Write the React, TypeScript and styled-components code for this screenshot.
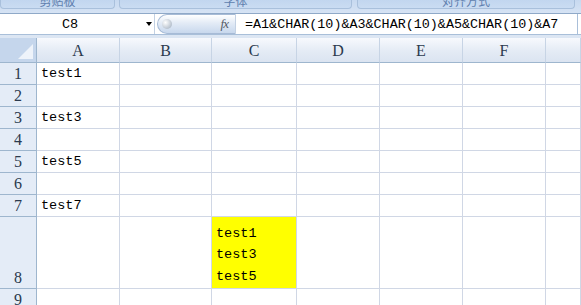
import React from "react";
import styled, { createGlobalStyle } from "styled-components";

const GlobalStyle = createGlobalStyle`
  html, body {
    margin: 0;
    padding: 0;
    background: #ffffff;
    overflow: hidden;
  }
`;

const CELL_FONT = `"Liberation Mono", "Noto Sans CJK SC", monospace`;
const HEAD_FONT = `"Liberation Serif", "Noto Sans CJK SC", serif`;
const GRID = "#d0d7e5";
const HEAD_LINE = "#9eb6ce";

const Page = styled.div`
  width: 581px;
  height: 305px;
  overflow: hidden;
  background: #dbe5f2;
`;

const Ribbon = styled.div`
  height: 13px;
  display: flex;
  align-items: flex-start;
  background: linear-gradient(#c7d9f0, #d6e3f4);
`;

const RibbonGroup = styled.div<{ $w: number; $ml: number }>`
  width: ${(p) => p.$w}px;
  margin-left: ${(p) => p.$ml}px;
  height: 9px;
  box-sizing: border-box;
  overflow: hidden;
  display: flex;
  align-items: flex-end;
  justify-content: center;
  background: linear-gradient(#c2d6ef, #cadcf2);
  border: 1px solid #a9c0dc;
  border-top: none;
  border-radius: 0 0 4px 4px;
`;

const RibbonLabel = styled.span`
  font-family: "Noto Sans CJK SC", sans-serif;
  font-size: 12px;
  line-height: 12px;
  margin-bottom: 1px;
  color: #5f7fae;
`;

const FormulaBar = styled.div`
  height: 20px;
  display: flex;
  align-items: stretch;
  background: #ffffff;
  border-top: 1px solid #8fa9c8;
  border-bottom: 1px solid #a9bfd9;
`;

const NameBox = styled.div`
  width: 155px;
  display: flex;
  align-items: center;
  border-right: 1px solid #c3d1e3;
  box-sizing: border-box;
`;

const NameText = styled.span`
  width: 140px;
  text-align: center;
  font-family: ${CELL_FONT};
  font-size: 13.5px;
  color: #000;
`;

const DropArrow = styled.span`
  width: 0;
  height: 0;
  border-left: 3.5px solid transparent;
  border-right: 3.5px solid transparent;
  border-top: 4px solid #000;
  margin-left: 6px;
`;

const FxButton = styled.div`
  margin-left: 2px;
  width: 79px;
  box-sizing: border-box;
  display: flex;
  align-items: center;
  justify-content: space-between;
  padding: 0 7px 0 4px;
  border-radius: 10px 0 0 10px;
  border: 1px solid #a7bbd6;
  border-right-color: #c3d1e3;
  background: linear-gradient(#ffffff, #e3ebf6 45%, #c8d8ed);
`;

const FxKnob = styled.span`
  width: 10px;
  height: 10px;
  border-radius: 50%;
  background: radial-gradient(circle at 35% 35%, #ffffff, #b9c3cf 70%, #9aa6b4);
`;

const FxLabel = styled.span`
  font-family: ${HEAD_FONT};
  font-style: italic;
  font-size: 13px;
  color: #555c66;
  letter-spacing: -1px;
`;

const FormulaText = styled.div`
  flex: 1;
  display: flex;
  align-items: center;
  padding-left: 9px;
  font-family: ${CELL_FONT};
  font-size: 13.4px;
  color: #000;
  white-space: nowrap;
  border-right: 1px solid #a9bfd9;
  margin-right: 3px;
`;

const Spacer = styled.div`
  height: 3px;
  background: #dce6f3;
`;

const Sheet = styled.div`
  display: grid;
  grid-template-columns: 37px 83px 92px 85px 83px 83px 83px 1fr;
  grid-template-rows: 25px repeat(7, 22px) 72px 22px;
  background: #ffffff;
`;

const Corner = styled.div`
  position: relative;
  background: #c5d6ec;
  border-right: 1px solid ${HEAD_LINE};
  border-bottom: 1px solid ${HEAD_LINE};
  box-sizing: border-box;
`;

const CornerTriangle = styled.div`
  position: absolute;
  right: 3px;
  bottom: 3px;
  width: 0;
  height: 0;
  border-left: 15px solid transparent;
  border-bottom: 15px solid #eef3fa;
`;

const ColHead = styled.div`
  display: flex;
  align-items: center;
  justify-content: center;
  box-sizing: border-box;
  background: linear-gradient(#f7f9fd, #e4ebf5 55%, #dbe4f1);
  border-right: 1px solid #c7d4e5;
  border-bottom: 1px solid ${HEAD_LINE};
  font-family: ${HEAD_FONT};
  font-size: 16px;
  color: #2b3a4e;
  padding-top: 2px;
`;

const RowHead = styled.div`
  display: flex;
  align-items: flex-end;
  justify-content: center;
  box-sizing: border-box;
  background: #e4ecf7;
  border-right: 1px solid ${HEAD_LINE};
  border-bottom: 1px solid ${HEAD_LINE};
  font-family: ${HEAD_FONT};
  font-size: 16px;
  line-height: 18px;
  color: #2b3a4e;
  padding-bottom: 1px;
`;

const Cell = styled.div<{ $fill?: string }>`
  display: flex;
  flex-direction: column;
  justify-content: flex-end;
  box-sizing: border-box;
  padding: 0 0 1px 4px;
  border-right: 1px solid ${GRID};
  border-bottom: 1px solid ${GRID};
  background: ${(p) => p.$fill ?? "#ffffff"};
  font-family: ${CELL_FONT};
  font-size: 13.5px;
  line-height: 18px;
  color: #000;
  white-space: pre;
  overflow: hidden;
`;

const WrapLine = styled.span`
  line-height: 21.5px;
`;

const columns = ["A", "B", "C", "D", "E", "F", ""];

const data: Record<string, string> = {
  A1: "test1",
  A3: "test3",
  A5: "test5",
  A7: "test7",
};

export default function App() {
  const rows = [1, 2, 3, 4, 5, 6, 7, 8, 9];
  return (
    <Page>
      <GlobalStyle />
      <Ribbon>
        <RibbonGroup $w={115} $ml={0}>
          <RibbonLabel>剪贴板</RibbonLabel>
        </RibbonGroup>
        <RibbonGroup $w={233} $ml={4}>
          <RibbonLabel>字体</RibbonLabel>
        </RibbonGroup>
        <RibbonGroup $w={218} $ml={5}>
          <RibbonLabel>对齐方式</RibbonLabel>
        </RibbonGroup>
      </Ribbon>
      <FormulaBar>
        <NameBox>
          <NameText>C8</NameText>
          <DropArrow />
        </NameBox>
        <FxButton>
          <FxKnob />
          <FxLabel>fx</FxLabel>
        </FxButton>
        <FormulaText>=A1&amp;CHAR(10)&amp;A3&amp;CHAR(10)&amp;A5&amp;CHAR(10)&amp;A7</FormulaText>
      </FormulaBar>
      <Spacer />
      <Sheet>
        <Corner>
          <CornerTriangle />
        </Corner>
        {columns.map((c, i) => (
          <ColHead key={i}>{c}</ColHead>
        ))}
        {rows.map((r) => (
          <React.Fragment key={r}>
            <RowHead>{r}</RowHead>
            {columns.map((c, i) => {
              const id = `${c}${r}`;
              if (id === "C8") {
                return (
                  <Cell key={i} $fill="#ffff00">
                    <WrapLine>test1</WrapLine>
                    <WrapLine>test3</WrapLine>
                    <WrapLine>test5</WrapLine>
                  </Cell>
                );
              }
              return <Cell key={i}>{data[id] ?? ""}</Cell>;
            })}
          </React.Fragment>
        ))}
      </Sheet>
    </Page>
  );
}
